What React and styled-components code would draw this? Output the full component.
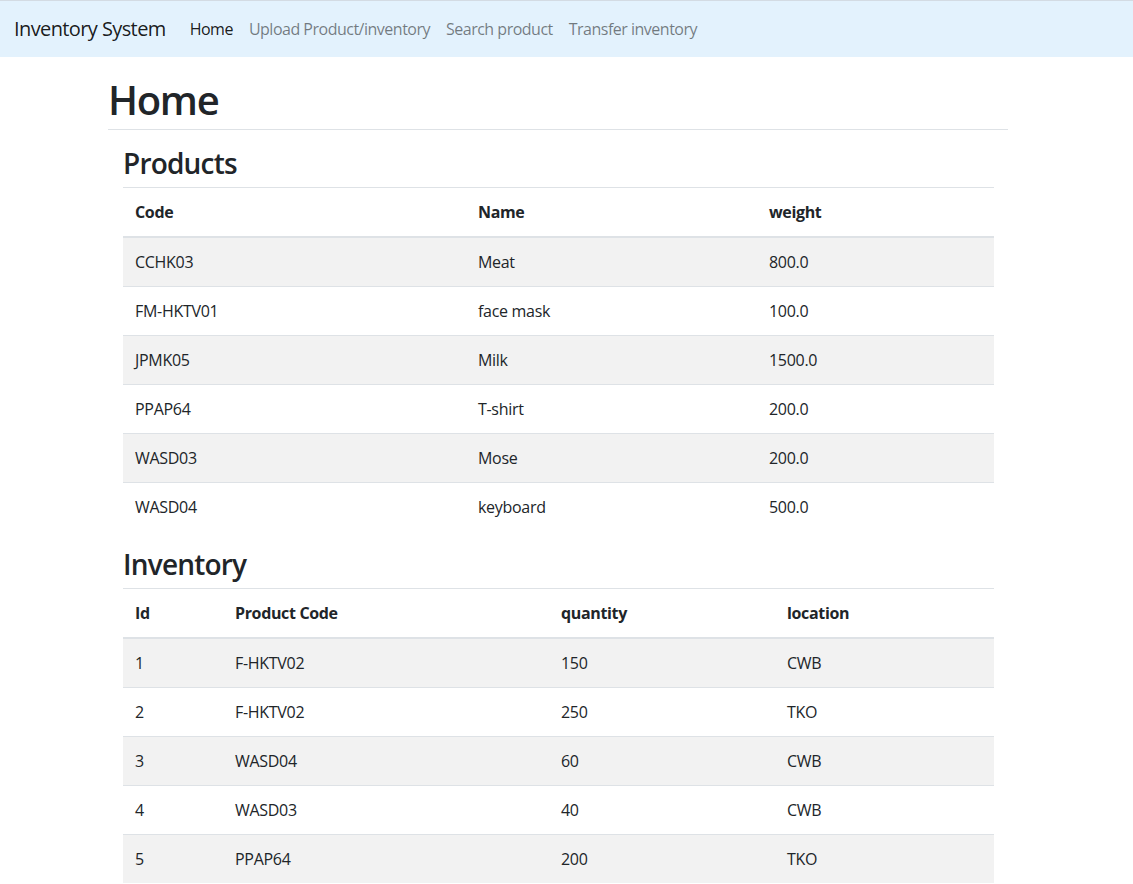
import React from "react";
import styled, { createGlobalStyle } from "styled-components";

const GlobalStyle = createGlobalStyle`
  html, body { margin: 0; padding: 0; background: #fff; }
  body {
    font-family: "Segoe UI", "Open Sans", "Noto Sans", sans-serif;
    font-size: 16px;
    line-height: 1.5;
    color: #212529;
  }
  * { box-sizing: border-box; }
`;

const Navbar = styled.nav`
  display: flex;
  align-items: center;
  height: 57px;
  padding: 0 16px 0 14px;
  background: #e3f2fd;
  border-top: 1px solid #d3dbe3;
`;

const Brand = styled.a`
  font-size: 20px;
  line-height: 30px;
  letter-spacing: -0.6px;
  color: rgba(0, 0, 0, 0.9);
  margin-right: 16px;
`;

const NavList = styled.div`
  display: flex;
`;

const NavLink = styled.a`
  padding: 8px;
  font-size: 16px;
  line-height: 24px;
  letter-spacing: -0.5px;
  color: ${(p) => (p.$active ? "rgba(0,0,0,0.9)" : "rgba(0,0,0,0.5)")};
`;

const Container = styled.main`
  width: 900px;
  margin-left: 108px;
`;

const PageTitle = styled.h1`
  margin: 19px 0 0;
  padding-bottom: 5px;
  font-size: 40px;
  font-weight: 600;
  line-height: 48px;
  letter-spacing: -1.3px;
  border-bottom: 1px solid #dee2e6;
`;

const Section = styled.section`
  padding: 16px 14px 0 15px;
`;

const SectionTitle = styled.h3`
  margin: 0 0 7px;
  padding-top: 1px;
  font-size: 28px;
  font-weight: 600;
  line-height: 33px;
  letter-spacing: -0.8px;
`;

const Table = styled.table`
  width: 100%;
  border-collapse: separate;
  border-spacing: 0;
  table-layout: fixed;
  margin-bottom: 16px;
`;

const Th = styled.th`
  text-align: left;
  padding: 12px;
  font-weight: 700;
  line-height: 24px;
  letter-spacing: -0.35px;
  border-top: 1px solid #dee2e6;
  border-bottom: 2px solid #dee2e6;
`;

const Row = styled.tr`
  background: ${(p) => (p.$striped ? "rgba(0,0,0,0.05)" : "transparent")};
`;

const Td = styled.td`
  padding: 12px;
  line-height: 24px;
  letter-spacing: -0.3px;
  border-top: ${(p) => (p.$divided ? "1px solid #dee2e6" : "0")};
`;

const products = [
  ["CCHK03", "Meat", "800.0"],
  ["FM-HKTV01", "face mask", "100.0"],
  ["JPMK05", "Milk", "1500.0"],
  ["PPAP64", "T-shirt", "200.0"],
  ["WASD03", "Mose", "200.0"],
  ["WASD04", "keyboard", "500.0"],
];

const inventory = [
  ["1", "F-HKTV02", "150", "CWB"],
  ["2", "F-HKTV02", "250", "TKO"],
  ["3", "WASD04", "60", "CWB"],
  ["4", "WASD03", "40", "CWB"],
  ["5", "PPAP64", "200", "TKO"],
];

function DataTable({ columns, widths, rows }) {
  return (
    <Table>
      <colgroup>
        {widths.map((w, i) => (
          <col key={i} style={{ width: w }} />
        ))}
      </colgroup>
      <thead>
        <tr>
          {columns.map((c) => (
            <Th key={c}>{c}</Th>
          ))}
        </tr>
      </thead>
      <tbody>
        {rows.map((r, i) => (
          <Row key={i} $striped={i % 2 === 0}>
            {r.map((v, j) => (
              <Td key={j} $divided={i > 0}>
                {v}
              </Td>
            ))}
          </Row>
        ))}
      </tbody>
    </Table>
  );
}

export default function App() {
  return (
    <>
      <GlobalStyle />
      <Navbar>
        <Brand>Inventory System</Brand>
        <NavList>
          <NavLink $active>Home</NavLink>
          <NavLink>Upload Product/inventory</NavLink>
          <NavLink>Search product</NavLink>
          <NavLink>Transfer inventory</NavLink>
        </NavList>
      </Navbar>
      <Container>
        <PageTitle>Home</PageTitle>
        <Section>
          <SectionTitle>Products</SectionTitle>
          <DataTable
            columns={["Code", "Name", "weight"]}
            widths={[343, 291, 237]}
            rows={products}
          />
          <SectionTitle>Inventory</SectionTitle>
          <DataTable
            columns={["Id", "Product Code", "quantity", "location"]}
            widths={[100, 326, 226, 219]}
            rows={inventory}
          />
        </Section>
      </Container>
    </>
  );
}
